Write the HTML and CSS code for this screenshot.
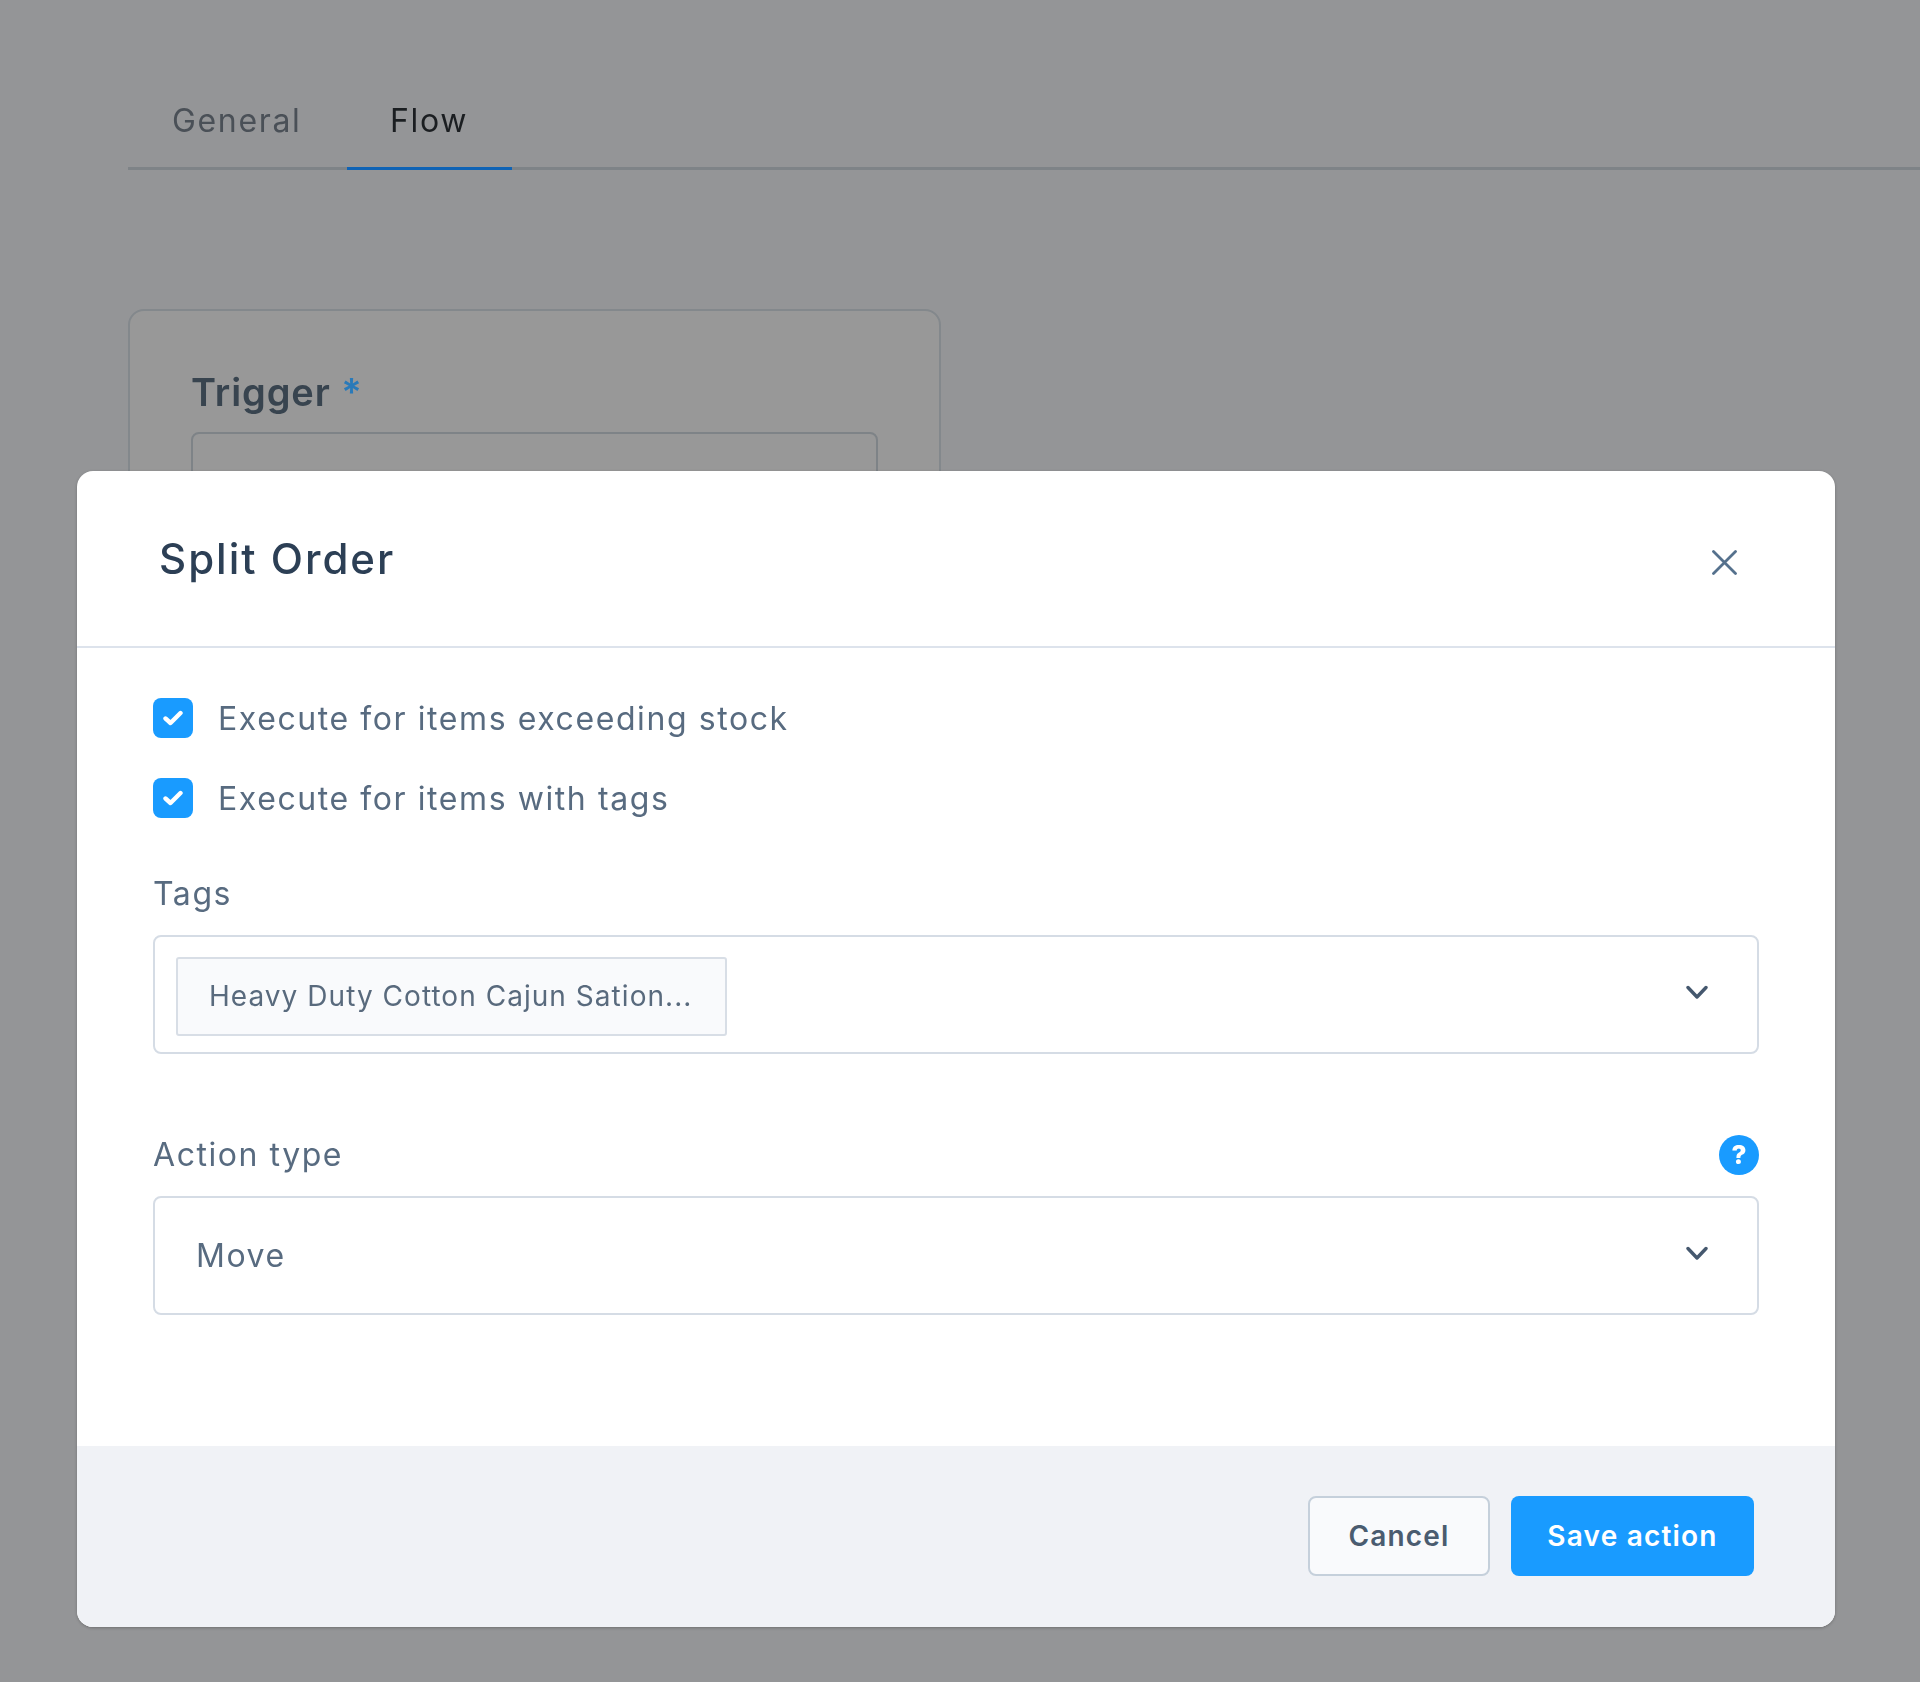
FILE: index.html
```html
<!DOCTYPE html>
<html lang="en">
<head>
<meta charset="utf-8">
<title>Split Order</title>
<link rel="stylesheet" href="styles.css">
</head>
<body>
<div class="page">
  <nav class="tabs">
    <a class="tab">General</a>
    <a class="tab tab-active">Flow</a>
  </nav>
  <section class="card">
    <div class="card-label">Trigger <span class="req">*</span></div>
    <div class="card-input"></div>
  </section>
</div>
<div class="modal">
  <header class="modal-head">
    <h2 class="modal-title">Split Order</h2>
    <svg class="close" width="25" height="25" viewBox="0 0 25 25"><path d="M1.5 1.5 23.5 23.5M23.5 1.5 1.5 23.5"/></svg>
  </header>
  <div class="modal-body">
    <label class="check">
      <span class="box"><svg width="20" height="16" viewBox="0 0 20 16"><path d="M2.5 8.5 7.5 13 17.5 3"/></svg></span>
      <span>Execute for items exceeding stock</span>
    </label>
    <label class="check check-next">
      <span class="box"><svg width="20" height="16" viewBox="0 0 20 16"><path d="M2.5 8.5 7.5 13 17.5 3"/></svg></span>
      <span>Execute for items with tags</span>
    </label>
    <div class="field-label field-tags">Tags</div>
    <div class="select select-tags">
      <span class="chip">Heavy Duty Cotton Cajun Sation...</span>
      <svg class="chev" width="22" height="15" viewBox="0 0 22 15"><path d="M2 2.5 11 12 20 2.5"/></svg>
    </div>
    <div class="field-label field-action">
      <span class="field-text">Action type</span>
      <span class="help">?</span>
    </div>
    <div class="select select-action">
      <span>Move</span>
      <svg class="chev" width="22" height="15" viewBox="0 0 22 15"><path d="M2 2.5 11 12 20 2.5"/></svg>
    </div>
  </div>
  <footer class="modal-foot">
    <button class="btn btn-cancel">Cancel</button>
    <button class="btn btn-save">Save action</button>
  </footer>
</div>
</body>
</html>
```
FILE: styles.css
```css
* { box-sizing: border-box; }
html, body { margin: 0; height: 100%; }
body {
  height: 1682px;
  overflow: hidden;
  background: #949597;
  font-family: Inter, "Liberation Sans", sans-serif;
  position: relative;
}
.page { padding: 0 0 0 128px; filter: blur(.5px); }
.tabs {
  display: flex;
  height: 170px;
  border-bottom: 3px solid #7e8387;
  align-items: stretch;
  padding-top: 97px;
}
.tab {
  width: 219px;
  padding-left: 44px;
  font-size: 32px;
  line-height: 48px;
  letter-spacing: 1.65px;
  color: #4a5057;
}
.tab-active {
  width: 165px;
  padding-left: 43px;
  margin-bottom: -3px;
  border-bottom: 3px solid #0f63b5;
  color: #1b1e21;
}
.card {
  width: 813px;
  height: 300px;
  margin-top: 139px;
  padding: 56px 61px 0;
  background: #989898;
  border: 2px solid #83888c;
  border-radius: 16px;
}
.card-label {
  font-size: 38px;
  line-height: 50px;
  font-weight: 600;
  letter-spacing: .9px;
  color: #38444f;
}
.req { color: #2a7ab9; }
.card-input {
  height: 100px;
  margin-top: 15px;
  border: 2px solid #7e8387;
  border-radius: 8px;
}
.modal {
  position: absolute;
  left: 77px;
  top: 471px;
  width: 1758px;
  height: 1156px;
  display: flex;
  flex-direction: column;
  background: #fff;
  border-radius: 16px;
  overflow: hidden;
  box-shadow: 0 1px 3px rgba(0, 0, 0, .25);
  filter: blur(.5px);
}
.modal-head {
  height: 177px;
  flex: none;
  display: flex;
  align-items: center;
  justify-content: space-between;
  padding: 0 98px 0 82px;
  border-bottom: 2px solid #dde3ec;
}
.modal-title {
  margin: 0;
  font-size: 42px;
  line-height: 56px;
  font-weight: 550;
  letter-spacing: 2px;
  color: #2c3f55;
}
.close { margin-top: 7px; }
.close path { fill: none; stroke: #55718d; stroke-width: 2.8; stroke-linecap: round; }
.modal-body {
  flex: 1;
  padding: 50px 76px 0 76px;
  display: flex;
  flex-direction: column;
}
.check {
  display: flex;
  align-items: center;
  gap: 25px;
  height: 40px;
  font-size: 32px;
  letter-spacing: 1.58px;
  color: #586b80;
}
.check-next { margin-top: 40px; }
.box {
  width: 40px;
  height: 40px;
  flex: none;
  display: flex;
  align-items: center;
  justify-content: center;
  background: #199bff;
  border-radius: 8px;
}
.box path { fill: none; stroke: #fff; stroke-width: 4.4; stroke-linecap: round; stroke-linejoin: round; }
.field-label {
  display: flex;
  align-items: center;
  justify-content: space-between;
  height: 40px;
  margin-bottom: 21px;
  font-size: 32px;
  letter-spacing: 1.55px;
  color: #586b80;
}
.field-tags { margin-top: 56px; padding-bottom: 2px; }
.field-action { margin-top: 81px; }
.field-text { margin-bottom: 2px; }
.help {
  width: 40px;
  height: 40px;
  border-radius: 50%;
  background: #199bff;
  color: #fff;
  font-size: 26px;
  font-weight: 800;
  line-height: 40px;
  letter-spacing: 0;
  text-align: center;
}
.select {
  height: 119px;
  flex: none;
  display: flex;
  align-items: center;
  justify-content: space-between;
  padding-right: 49px;
  border: 2px solid #d5dce5;
  border-radius: 8px;
  font-size: 32px;
  letter-spacing: 1.55px;
  color: #586b80;
}
.select-tags { padding-left: 21px; }
.select-action { padding-left: 41px; }
.chip {
  width: 551px;
  height: 79px;
  margin-top: 4px;
  padding: 0 0 2px 31px;
  display: flex;
  align-items: center;
  background: #f9fafc;
  border: 2px solid #d8dee6;
  border-radius: 3px;
  font-size: 28px;
  letter-spacing: 1.04px;
  white-space: nowrap;
  color: #596a7d;
}
.chev { margin-bottom: 5px; }
.chev path { fill: none; stroke: #45586e; stroke-width: 3.4; stroke-linecap: round; stroke-linejoin: round; }
.modal-foot {
  height: 181px;
  flex: none;
  display: flex;
  justify-content: flex-end;
  gap: 21px;
  padding: 50px 81px 51px 0;
  background: #f0f2f6;
}
.btn {
  height: 80px;
  border-radius: 8px;
  font-family: inherit;
  font-size: 28px;
  font-weight: 600;
  letter-spacing: 1.2px;
  padding: 0;
}
.btn-cancel {
  width: 182px;
  background: #f9fafc;
  border: 2px solid #c5d0db;
  color: #4a5c70;
}
.btn-save {
  width: 243px;
  background: #199bff;
  border: 0;
  color: #fff;
}
```
